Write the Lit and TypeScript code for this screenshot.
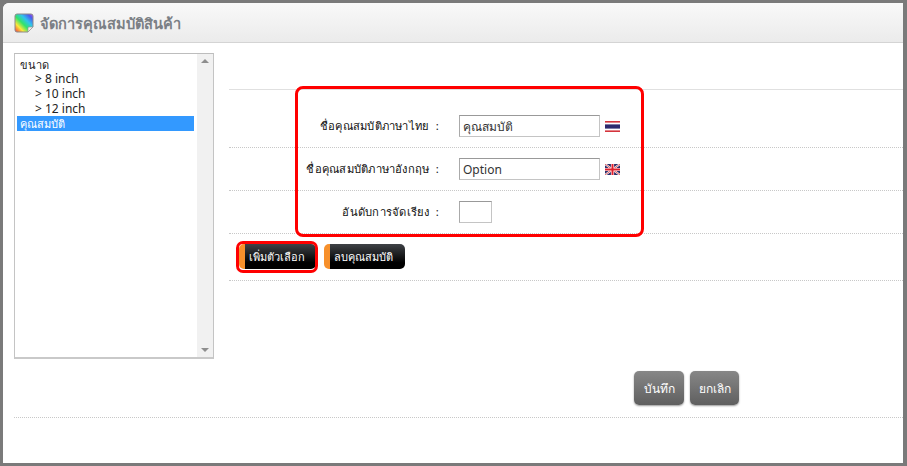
import { LitElement, html, css } from "lit";
import { customElement } from "lit/decorators.js";

@customElement("app-root")
export class AppRoot extends LitElement {
  static styles = css`
    :host { display: block; width: 907px; height: 466px; background: #7a7a7a; font-family: "Noto Sans", "Open Sans", Tahoma, sans-serif; font-size: 12px; color: #222; overflow: hidden; }
    * { box-sizing: border-box; }
    .frame { margin: 3px 4px 0 3px; height: 460px; background: #fff; border-radius: 6px 0 0 0; position: relative; overflow: hidden; }
    .head { height: 40px; background: linear-gradient(#f9f9f9, #ebebeb); border-bottom: 1px solid #d4d4d4; display: flex; align-items: center; gap: 6px; padding: 0 0 0 11px; }
    .head span { font-size: 14.6px; font-weight: 700; color: #7b7f85; line-height: 20px; }
    .icon { width: 20px; height: 20px; display: block; }
    .main { display: grid; grid-template-columns: 200px 1fr; column-gap: 15px; padding: 10px 0 0 11px; }
    .list { width: 200px; height: 306px; border-style: solid; border-width: 1px 1px 2px 1px; border-color: #bdbdbd #c4c4c4 #c9c9c9 #c4c4c4; display: flex; background: #fff; }
    .items { flex: 1; padding: 3px 3px 0 2px; line-height: 15px; font-size: 11px; }
    .opt { height: 15px; padding-left: 3px; white-space: nowrap; color: #222; }
    .opt:first-child { height: 14px; }
    .opt.child { padding-left: 18px; font-size: 12px; }
    .opt.sel { background: #3399ff; color: #fff; }
    .bar { width: 16px; background: #f1f1f1; display: flex; flex-direction: column; justify-content: space-between; align-items: center; padding: 5px 0; }
    .up { width: 0; height: 0; border: 4px solid transparent; border-top: 0; border-bottom: 4px solid #8e8e8e; }
    .down { width: 0; height: 0; border: 4px solid transparent; border-bottom: 0; border-top: 4px solid #8e8e8e; }
    .right { padding-top: 36px; }
    .row { border-top: 1px dotted #c8c8c8; display: flex; align-items: center; }
    .first { height: 58px; padding-top: 15px; border-top-style: solid; border-top-color: #e0e0e0; }
    .second, .third { height: 43px; }
    .label { width: 210px; text-align: right; font-size: 11.2px; letter-spacing: 0.24px; color: #111; white-space: nowrap; }
    .field { margin-left: 20px; width: 141px; height: 22px; border: 1px solid #c4c4c4; border-top-color: #999; border-left-color: #aaa; font: inherit; font-size: 12px; color: #333; padding: 0 3px; background: #fff; outline: none; }
    .short { width: 33px; }
    .flag { width: 15px; height: 11px; margin-left: 5px; display: block; }
    .btnrow { height: 47px; border-top: 1px dotted #c8c8c8; display: flex; gap: 8px; padding: 10px 0 0 10px; align-items: flex-start; }
    .bk { height: 25px; border-radius: 5px; border: 0; background: linear-gradient(90deg, #f7902b 6px, transparent 6px), linear-gradient(#3f4247, #000 75%); color: #fff; font: inherit; font-size: 11px; padding: 0 0 0 10px; text-align: left; white-space: nowrap; }
    .w1 { width: 77px; }
    .w2 { width: 81px; }
    .end { border-top: 1px dotted #c8c8c8; height: 1px; }
    .actions { display: flex; gap: 6px; margin-left: 631px; margin-top: 12px; height: 46px; }
    .gr { width: 50px; height: 34px; border: 0; border-radius: 5px; background: linear-gradient(#878787, #5f5f5f); color: #fff; font: inherit; font-size: 12px; box-shadow: 0 1px 2px #999; }
    .gr.narrow { width: 49px; }
    .foot { margin: 0 0 0 11px; border-top: 1px dotted #c8c8c8; height: 1px; }
    .mark { position: absolute; border: 3px solid #f00; pointer-events: none; }
    .m1 { left: 292px; top: 83px; width: 349px; height: 151px; border-radius: 8px; }
    .m2 { left: 233px; top: 238px; width: 82px; height: 32px; border-radius: 7px; }
  `;

  render() {
    return html`
      <div class="frame">
        <div class="head">
          <svg class="icon" viewBox="0 0 20 20">
            <defs>
              <linearGradient id="s" x1="0" y1="1" x2="1" y2="0">
                <stop offset="0" stop-color="#f5333f"/><stop offset=".25" stop-color="#fbe93a"/><stop offset=".45" stop-color="#33e36a"/><stop offset=".65" stop-color="#2fc4ee"/><stop offset=".85" stop-color="#4a5cf0"/><stop offset="1" stop-color="#c04ae8"/>
              </linearGradient>
            </defs>
            <path d="M3 1h14a2 2 0 0 1 2 2v11l-5 5H3a2 2 0 0 1-2-2V3a2 2 0 0 1 2-2z" fill="url(#s)" stroke="#8a8a8a"/>
            <path d="M19 14l-5 5v-4a1 1 0 0 1 1-1z" fill="#eee" stroke="#999" stroke-width=".7"/>
          </svg>
          <span>จัดการคุณสมบัติสินค้า</span>
        </div>
        <div class="main">
          <div class="list">
            <div class="items">
              <div class="opt">ขนาด</div>
              <div class="opt child">&gt; 8 inch</div>
              <div class="opt child">&gt; 10 inch</div>
              <div class="opt child">&gt; 12 inch</div>
              <div class="opt sel">คุณสมบัติ</div>
            </div>
            <div class="bar"><i class="up"></i><i class="down"></i></div>
          </div>
          <div class="right">
            <div class="row first">
              <div class="label">ชื่อคุณสมบัติภาษาไทย&nbsp; :</div>
              <input class="field" .value=${"คุณสมบัติ"} />
              <svg class="flag" viewBox="0 0 15 11">
                <rect width="15" height="11" fill="#fff"/><rect width="15" height="1.6" fill="#d4343c"/><rect y="9.4" width="15" height="1.6" fill="#d4343c"/><rect y="3.4" width="15" height="4.2" fill="#2d2a6e"/>
              </svg>
            </div>
            <div class="row second">
              <div class="label">ชื่อคุณสมบัติภาษาอังกฤษ&nbsp; :</div>
              <input class="field" .value=${"Option"} />
              <svg class="flag" viewBox="0 0 15 11">
                <rect width="15" height="11" fill="#2b2f6b"/>
                <path d="M0 0l15 11M15 0L0 11" stroke="#fff" stroke-width="2"/>
                <path d="M0 0l15 11M15 0L0 11" stroke="#d4343c" stroke-width=".8"/>
                <path d="M7.5 0v11M0 5.5h15" stroke="#fff" stroke-width="3.2"/>
                <path d="M7.5 0v11M0 5.5h15" stroke="#e0202c" stroke-width="2"/>
              </svg>
            </div>
            <div class="row third">
              <div class="label">อันดับการจัดเรียง&nbsp; :</div>
              <input class="field short" />
            </div>
            <div class="btnrow">
              <button class="bk w1">เพิ่มตัวเลือก</button>
              <button class="bk w2">ลบคุณสมบัติ</button>
            </div>
            <div class="end"></div>
          </div>
        </div>
        <div class="actions">
          <button class="gr">บันทึก</button>
          <button class="gr narrow">ยกเลิก</button>
        </div>
        <div class="foot"></div>
        <div class="mark m1"></div>
        <div class="mark m2"></div>
      </div>
    `;
  }
}
